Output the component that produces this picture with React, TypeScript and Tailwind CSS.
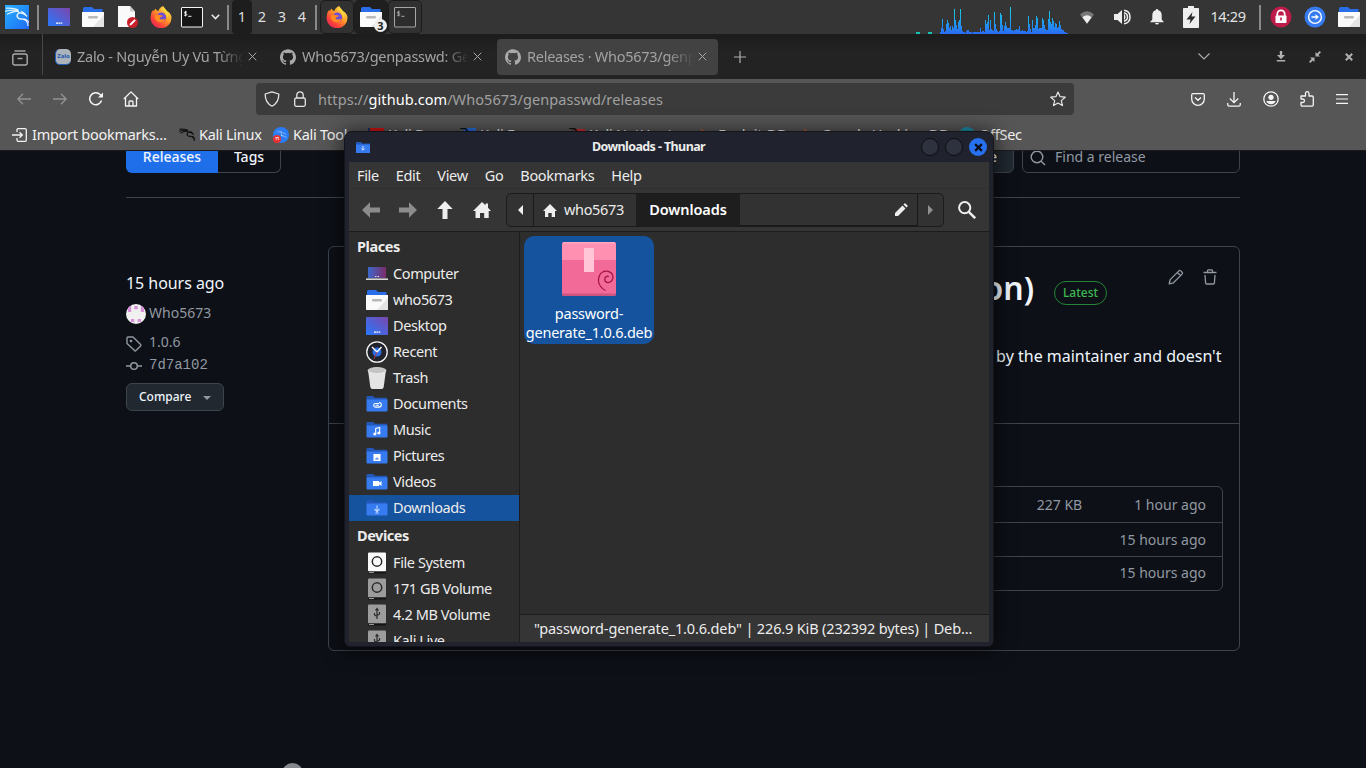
import type { ReactNode } from "react";
import { SiKalilinux, SiGithub } from "react-icons/si";

const UI = "font-['Noto_Sans',sans-serif]";

function Cell({ w, children }: { w: string; children: ReactNode }) {
  return <div className={`flex h-[34px] shrink-0 items-center justify-center ${w}`}>{children}</div>;
}

function Sep() {
  return (
    <Cell w="w-2">
      <div className="h-[25px] w-[2px] bg-[#8a8a8a]" />
    </Cell>
  );
}

function DesktopIcon({ className = "h-[18px] w-[22px]" }: { className?: string }) {
  return (
    <svg viewBox="0 0 22 18" className={className}>
      <defs>
        <linearGradient id="desk" x1="0" y1="1" x2="1" y2="0">
          <stop offset="0.1" stopColor="#2f74f5" />
          <stop offset="1" stopColor="#7d46ac" />
        </linearGradient>
      </defs>
      <rect width="22" height="18" rx="0.8" fill="url(#desk)" />
      <path d="M8 14.5h2v1.3H8zM10.4 14.5h1.6v1.3h-1.6zM12.5 14.5h1.8v1.3h-1.8z" fill="#fff" />
    </svg>
  );
}

function HomeFolder() {
  return (
    <svg viewBox="0 0 22 20" className="h-5 w-[22px]">
      <path d="M1 1.5Q1 0 2.5 0H10l2 2h8.500v5H1z" fill="#2a6de8" />
      <path d="M0 5h22v14.2q0 .8-.8.8H.8q-.8 0-.8-.8z" fill="#fafafa" />
      <path d="M22 8v11.2q0 .8-.8.8H11z" fill="#e4e4e4" />
      <rect x="6" y="9" width="10" height="2.4" rx="1.2" fill="#b9b9b9" />
    </svg>
  );
}

function Firefox() {
  return (
    <svg viewBox="0 0 22 22" className="h-[22px] w-[22px]">
      <defs>
        <linearGradient id="fx" x1="0.85" y1="0.1" x2="0.15" y2="0.95">
          <stop offset="0" stopColor="#ffe04a" />
          <stop offset="0.4" stopColor="#ff9a2a" />
          <stop offset="0.75" stopColor="#fb4338" />
          <stop offset="1" stopColor="#e72360" />
        </linearGradient>
      </defs>
      <path
        d="M13 0q-1 3 1.5 5 2.3 2 3.2 3.2-.1-2-.9-3.2Q21.600 7.500 21.500 12A10.500 10.100 0 0 1 .5 12Q.4 7 3.200 3.500q0 1 .4 1.700Q5 3.600 5.200 2.500q1 1.700 3.300 2.700Q9 1.800 13 0z"
        fill="url(#fx)"
      />
      <circle cx="11.300" cy="11.400" r="4.800" fill="#6d4fd6" />
      <path d="M6.500 9q2.800-.8 4.500.2 1 .6 2 .3-.5 1.500-2.300 1.600-1 .3-.9 1.300.6 1.300 2.600 1 2-.6 3 0-2 3.300-5.600 2.800-4.600-.800-5-5.200 0-1.600 1.700-2z" fill="#ff8a1e" />
      <path d="M13 0q-2 3 1 5.500 3.500 2.800 3.300 6.500 1.600-2 1-5Q16.500 4 13 0z" fill="#ffd83f" />
    </svg>
  );
}

function Terminal({ dim = false }: { dim?: boolean }) {
  return (
    <svg viewBox="0 0 22 21" className={dim ? "h-[21px] w-[22px] opacity-60" : "h-[21px] w-[22px]"}>
      <rect x="0.5" y="0.5" width="21" height="19.500" rx="0.5" fill={dim ? "#2b2b2b" : "#161616"} stroke="#f5f5f5" />
      <path d="M5.900 5.100q-2.600-.9-2.600.6 0 .8 1.300 1 1.400.200 1.300 1.100-.1 1.200-2.700.5M4.600 3.800v5.600M7.200 9.300h3.300" stroke="#eee" strokeWidth="1" fill="none" />
    </svg>
  );
}

const load = [
  2, 6, 15, 5, 2, 3, 10, 14, 11, 6, 8, 4, 8, 6, 25, 14, 9, 5, 12, 14, 25, 8, 3, 2, 2, 1, 3, 4, 4, 2, 2, 2, 1, 2, 2, 2, 2, 2,
  2, 2, 6, 2, 3, 3, 2, 14, 10, 12, 19, 4, 14, 5, 4, 3, 22, 10, 5, 3, 2, 3, 21, 19, 9, 3, 8, 12, 8, 6, 6, 6, 27, 4, 4, 3, 4,
  4, 5, 4, 5, 8, 3, 3, 4, 3, 3, 3, 2, 3, 18, 10, 5, 2, 14, 6, 6, 9, 18, 16, 5, 6, 6, 6, 16, 14, 9, 5, 4, 4, 15, 23, 12, 10,
  16, 13, 7, 11, 10, 6, 7, 13, 9, 5, 4, 4, 2, 2, 1, 1,
];

function LoadGraph() {
  return (
    <svg viewBox="0 0 152 34" className="h-[34px] w-[152px]" shapeRendering="crispEdges">
      <defs>
        <linearGradient id="load" gradientUnits="userSpaceOnUse" x1="0" y1="8" x2="0" y2="34">
          <stop offset="0" stopColor="#16cfe0" />
          <stop offset="0.5" stopColor="#1fa3ee" />
          <stop offset="1" stopColor="#2a6af5" />
        </linearGradient>
      </defs>
      <path d="M0 32h4v2H0zM12 32h4v2h-4z" fill="#17c3b0" />
      {load.map((h, i) => (
        <rect key={i} x={24 + i} y={34 - h} width="1" height={h} fill="url(#load)" />
      ))}
    </svg>
  );
}

function TaskBar() {
  return (
    <header className="flex h-[34px] shrink-0 items-center bg-[#353535]">
      <Cell w="w-[34px]">
        <div className="flex size-6 items-center justify-center bg-gradient-to-br from-[#2bb2ff] to-[#2368f3]">
          <SiKalilinux className="size-6 text-white" stroke="#fff" strokeWidth="0.6" />
        </div>
      </Cell>
      <Sep />
      <Cell w="w-[34px]"><DesktopIcon /></Cell>
      <Cell w="w-[34px]"><HomeFolder /></Cell>
      <Cell w="w-[36px]">
        <svg viewBox="0 0 22 22" className="size-[22px]">
          <path d="M1 0h12l5 5.500V21H1z" fill="#fafafa" />
          <path d="M13 0l5 5.500h-5z" fill="#c9c9c9" />
          <circle cx="15.500" cy="16.500" r="5.500" fill="#c8202b" />
          <path d="M12.500 19.500l.6-1.900 4.400-4.300 1.300 1.300-4.400 4.300z" fill="#fff" />
        </svg>
      </Cell>
      <Cell w="w-[30px]"><Firefox /></Cell>
      <Cell w="w-[32px]"><Terminal /></Cell>
      <Cell w="w-[14px]">
        <svg viewBox="0 0 9 6" className="h-1.5 w-[9px]"><path d="M.8.800l3.700 3.700L8.200.800" fill="none" stroke="#e8e8e8" strokeWidth="1.600" /></svg>
      </Cell>
      <div className="w-[2px]" />
      <Sep />
      {["1", "2", "3", "4"].map((n) => (
        <div
          key={n}
          className={`flex h-[34px] w-5 items-center justify-center text-[14.5px] text-[#dedede] ${n === "1" ? "rounded bg-[#1d1d1d]" : ""}`}
        >
          {n}
        </div>
      ))}
      <Sep />
      <div className="flex h-[34px] w-[34px] items-center justify-center rounded-[5px] border border-[#1c1c1c] bg-[#313131]"><Firefox /></div>
      <div className="relative flex h-[34px] w-[34px] items-center justify-center rounded-[5px] bg-[#1f1f1f]">
        <HomeFolder />
        <span className="absolute right-px bottom-0.5 flex size-[13px] items-center justify-center rounded-full bg-[#eee] text-[11px] leading-none font-bold text-[#222]">3</span>
      </div>
      <div className="flex h-[34px] w-[34px] items-center justify-center rounded-[5px] border border-[#1c1c1c] bg-[#313131]"><Terminal dim /></div>
      <div className="flex-1" />
      <LoadGraph />
      <Cell w="w-[37px]">
        <svg viewBox="0 0 14 13" className="h-[13px] w-3.5">
          <path d="M0 3.500Q7-3 14 3.500L7 13z" fill="#777" />
          <path d="M2.400 6.200Q7 2.300 11.600 6.200L7 12.500z" fill="#efefef" />
        </svg>
      </Cell>
      <Cell w="w-[35px]">
        <svg viewBox="0 0 18 16" className="h-4 w-[18px]">
          <path d="M0 5h3.500L8 1v14l-4.500-4H0z" fill="#eee" />
          <path d="M10 4.500q3 3.500 0 7z" fill="#eee" />
          <path d="M10 1.200q6 .8 6 6.800t-6 6.800M10 3.700q3.500.8 3.500 4.300T10 12.300" fill="none" stroke="#eee" strokeWidth="1.500" />
        </svg>
      </Cell>
      <Cell w="w-[34px]">
        <svg viewBox="0 0 14 16" className="h-4 w-3.5" fill="#eee">
          <path d="M7 0q1.200 0 1.200 1.200Q11.500 2 11.700 6v4.500L14 13.200H0l2.300-2.700V6Q2.500 2 5.800 1.200 5.800 0 7 0zM5 14h4q-.4 1.600-2 1.600T5 14z" />
        </svg>
      </Cell>
      <Cell w="w-[34px]">
        <svg viewBox="0 0 16 22" className="h-[22px] w-4">
          <path d="M5 0h6v2h4.200q.8 0 .8.800V21.200q0 .8-.8.8H.8q-.8 0-.8-.8V2.800q0-.8.800-.8H5z" fill="#eee" />
          <path d="M9.500 6L3.500 13.500h4L6.500 18l6-7.500h-4z" fill="#2b2b2b" />
        </svg>
      </Cell>
      <Cell w="w-10"><span className="text-[14.5px] tracking-[-0.4px] text-[#e2e2e2]">14:29</span></Cell>
      <div className="w-2" />
      <Sep />
      <Cell w="w-[33px]">
        <svg viewBox="0 0 22 22" className="size-[22px]">
          <circle cx="11" cy="11" r="10.500" fill="#bd1c49" />
          <path d="M7.300 10V8a3.700 3.700 0 0 1 7.400 0v2" fill="none" stroke="#fff" strokeWidth="1.800" />
          <rect x="5.500" y="9.500" width="11" height="7.500" rx="0.800" fill="#fff" />
          <path d="M10.200 11.500h1.600v3h-1.600z" fill="#bd1c49" />
        </svg>
      </Cell>
      <Cell w="w-[35px]">
        <svg viewBox="0 0 22 22" className="size-[22px]">
          <circle cx="11" cy="11" r="10.500" fill="#367bf0" />
          <circle cx="11" cy="11" r="6.400" fill="none" stroke="#fff" strokeWidth="1.400" />
          <path d="M7.500 10.200h4V8.300L15 11l-3.500 2.700v-1.900h-4z" fill="#fff" />
        </svg>
      </Cell>
      <Cell w="w-[34px]"><HomeFolder /></Cell>
    </header>
  );
}

function Tab({ icon, label, active = false }: { icon: ReactNode; label: string; active?: boolean }) {
  return (
    <div className={`mr-1 flex h-9 w-[221px] items-center rounded pl-2 ${active ? "bg-[#424242]" : ""}`}>
      {icon}
      <span className="mt-px ml-[6px] w-[167px] overflow-hidden whitespace-nowrap text-[14.5px] tracking-[-0.27px] text-[#a3a3a3] [mask-image:linear-gradient(to_right,black_84%,transparent)]">
        {label}
      </span>
      <svg viewBox="0 0 10 10" className="ml-1 size-[9px]"><path d="M.8.800l8.400 8.400M9.200.800L.8 9.200" stroke="#aaa" strokeWidth="1.100" /></svg>
    </div>
  );
}

function TabStrip() {
  return (
    <div className="flex h-[45px] shrink-0 items-center bg-gradient-to-b from-[#1c1c1c] via-[#232323] via-40% to-[#232323]">
      <div className="flex h-[41px] w-[43px] items-center justify-center self-start border-r border-[#484848] pt-1.5 pr-0.5">
        <svg viewBox="0 0 16 16" className="size-4" fill="none" stroke="#aaa" strokeWidth="1.400">
          <path d="M2.500 1h11" />
          <rect x="0.800" y="4" width="14.400" height="11" rx="2" />
          <path d="M5.500 8.500h5" />
        </svg>
      </div>
      <div className="ml-1 flex">
        <Tab
          label="Zalo - Nguyễn Uy Vũ Từng"
          icon={<span className="flex size-4 items-center justify-center rounded-[5px] border-b border-l border-[#2060c0] bg-[#adb3ba] text-[6px] font-bold text-[#1c56ac]">Zalo</span>}
        />
        <Tab label="Who5673/genpasswd: Gen" icon={<SiGithub className="size-4 text-[#aaa]" />} />
        <Tab active label="Releases · Who5673/genp" icon={<SiGithub className="size-4 text-[#aaa]" />} />
      </div>
      <svg viewBox="0 0 12 12" className="ml-3 size-3"><path d="M6 0v12M0 6h12" stroke="#b0b0b0" strokeWidth="1.200" /></svg>
      <div className="flex-1" />
      <svg viewBox="0 0 12 7" className="mr-[66px] h-[7px] w-3"><path d="M.5.500L6 6 11.500.500" fill="none" stroke="#aaa" strokeWidth="1.200" /></svg>
      <svg viewBox="0 0 10 11" className="mr-[23px] h-[11px] w-[10px]" fill="#b0b0b0"><path d="M3.800 0h2.400v4H9L5 8.300 1 4h2.800zM.8 9h8.400v1.600H.8z" /></svg>
      <svg viewBox="0 0 12 12" className="mr-6 size-3" fill="#b0b0b0"><path d="M6.500 5.500V1l1.600 1.600L10.700 0 12 1.300 9.400 3.900 11 5.500zM5.500 6.500V11L3.900 9.400 1.300 12 0 10.700l2.600-2.600L1 6.500z" /></svg>
      <svg viewBox="0 0 8 8" className="mr-[13px] size-2"><path d="M.8.800l6.400 6.400M7.200.800L.8 7.200" stroke="#b0b0b0" strokeWidth="2" /></svg>
    </div>
  );
}

function NavBar() {
  return (
    <div className="flex h-10 shrink-0 items-center bg-[#565656]">
      <svg viewBox="0 0 14 12" className="ml-[17px] h-3 w-3.5" fill="none" stroke="#939393" strokeWidth="1.300"><path d="M14 6H1M6 .800L.9 6 6 11.200" /></svg>
      <svg viewBox="0 0 14 12" className="ml-[22px] h-3 w-3.5" fill="none" stroke="#939393" strokeWidth="1.300"><path d="M0 6h13M8 .800L13.100 6 8 11.200" /></svg>
      <svg viewBox="0 0 14 14" className="ml-[22px] size-3.5" fill="none" stroke="#f5f5f5" strokeWidth="1.500">
        <path d="M12.500 8.500A6 6 0 1 1 11 2.500l1.500 1.500" />
        <path d="M9 5.500h5v-5z" fill="#f5f5f5" stroke="none" />
      </svg>
      <svg viewBox="0 0 16 16" className="ml-5 size-4" fill="none" stroke="#f5f5f5" strokeWidth="1.300" strokeLinejoin="round">
        <path d="M.8 8L8 .900 15.200 8M2.500 6.800V15h11V6.800" />
        <path d="M6 15v-4q0-1 1-1h2q1 0 1 1v4" />
      </svg>
      <div className="ml-[117px] flex h-8 w-[818px] items-center rounded bg-[#3b3b3b]">
        <svg viewBox="0 0 16 16" className="ml-2 size-4" fill="none" stroke="#e5e5e5" strokeWidth="1.300" strokeLinejoin="round">
          <path d="M8 .800L14.800 3q.2 8.500-6.800 12.200Q1 11.500 1.200 3z" />
        </svg>
        <svg viewBox="0 0 12 16" className="ml-[14px] h-4 w-3" fill="none" stroke="#e5e5e5" strokeWidth="1.300">
          <rect x="0.700" y="7" width="10.600" height="8.300" rx="1.500" />
          <path d="M2.800 7V4a3.200 3.200 0 0 1 6.400 0v3" />
        </svg>
        <span className="mt-0.5 ml-3 text-[14.5px] tracking-[0.07px] text-[#a0a0a0]">
          https://<span className="text-white">github.com</span>/Who5673/genpasswd/releases
        </span>
        <svg viewBox="0 0 16 16" className="mr-2 ml-auto size-4" fill="none" stroke="#e8e8e8" strokeWidth="1.200" strokeLinejoin="round">
          <path d="M8 1l2.100 4.700 5.100.5-3.900 3.400 1.200 5L8 12l-4.500 2.600 1.200-5L.8 6.200l5.100-.5z" />
        </svg>
      </div>
      <div className="ml-auto flex items-center text-[#f5f5f5]">
        <svg viewBox="0 0 14 13" className="mr-[22px] h-[13px] w-3.5" fill="none" stroke="currentColor" strokeWidth="1.300">
          <path d="M2 .700h10q1.300 0 1.300 1.300v4a6.300 6.300 0 0 1-12.600 0V2Q.7.700 2 .700zM4 4.500l3 2.800 3-2.800" />
        </svg>
        <svg viewBox="0 0 14 15" className="mr-[22px] h-[15px] w-3.5" fill="none" stroke="currentColor" strokeWidth="1.300">
          <path d="M7 0v10.500M2.800 6.500L7 10.600l4.200-4.100M.7 11v1.500q0 1.700 1.700 1.700h9.200q1.700 0 1.700-1.700V11" />
        </svg>
        <svg viewBox="0 0 16 16" className="mr-[21px] size-4">
          <circle cx="8" cy="8" r="7.200" fill="none" stroke="currentColor" strokeWidth="1.300" />
          <circle cx="8" cy="6.300" r="2.600" fill="currentColor" />
          <path d="M3.300 10h9.400q-1.500 3.300-4.700 3.300T3.300 10z" fill="currentColor" />
        </svg>
        <svg viewBox="0 0 14 16" className="mr-[22px] h-4 w-3.5" fill="none" stroke="currentColor" strokeWidth="1.300" strokeLinejoin="round">
          <path d="M1 5h4.500V2.500q0-1.800 1.700-1.800T9 2.500V5h3q1.300 0 1.300 1.300v7.500q0 1.400-1.300 1.400H2.300Q1 15.200 1 13.800V11.500h1.700q1.800 0 1.800-1.700T2.700 8H1z" />
        </svg>
        <svg viewBox="0 0 12 10" className="mr-[18px] h-[10px] w-3"><path d="M0 .600h12M0 5h12M0 9.400h12" stroke="currentColor" strokeWidth="1.200" /></svg>
      </div>
    </div>
  );
}

function Bookmark({ icon, label, w }: { icon: ReactNode; label: string; w: string }) {
  return (
    <div className={`flex shrink-0 items-center gap-1 whitespace-nowrap ${w}`}>
      {icon}
      <span>{label}</span>
    </div>
  );
}

function BookmarkBar() {
  return (
    <div className="flex h-8 shrink-0 items-center border-b border-[#1b1b1b] bg-[#565656] pl-3 text-[14.5px] tracking-[-0.27px] text-[#f2f2f2]">
      <Bookmark
        w="w-[167px]"
        label="Import bookmarks…"
        icon={
          <svg viewBox="0 0 16 14" className="h-3.5 w-4" fill="none" stroke="#f2f2f2" strokeWidth="1.300">
            <path d="M5 4V2Q5 .700 6.300.700H13q1.300 0 1.300 1.300v10q0 1.300-1.300 1.300H6.300Q5 13.300 5 12v-2M0 7h10M7.500 4.300L10.300 7 7.500 9.700" />
          </svg>
        }
      />
      <Bookmark w="w-[94px]" label="Kali Linux" icon={<SiKalilinux className="size-4 text-[#080808]" stroke="#080808" strokeWidth="0.8" />} />
      <Bookmark
        w="w-[95px]"
        label="Kali Tools"
        icon={
          <span className="relative flex size-4 items-center justify-center rounded-full bg-[#2a7cf5]">
            <SiKalilinux className="size-3 text-white" />
            <span className="absolute bottom-0 left-0 flex size-2 items-center justify-center rounded-full bg-[#e83030] text-[6px] text-white">π</span>
          </span>
        }
      />
      <Bookmark w="w-[92px]" label="Kali Docs" icon={<span className="h-3.5 w-4 border-l-2 border-[#17305e] bg-[#d01414]" />} />
      <Bookmark w="w-[109px]" label="Kali Forums" icon={<svg viewBox="0 0 16 14" className="h-3.5 w-4"><path d="M3 0h13v14H6z" fill="#2a6fdd" /><path d="M0 0l6 1 3 4" stroke="#111" strokeWidth="1.500" fill="none" /></svg>} />
      <Bookmark w="w-[129px]" label="Kali NetHunter" icon={<svg viewBox="0 0 16 14" className="h-3.5 w-4"><path d="M5 1h11v13H6z" fill="#d62931" /><path d="M0 0l6 1 3 4" stroke="#111" strokeWidth="1.500" fill="none" /></svg>} />
      <Bookmark w="w-[103px]" label="Exploit-DB" icon={<svg viewBox="0 0 16 16" className="size-4"><path d="M2 1l6 4 6 8-8-6z" fill="#c9572a" /></svg>} />
      <Bookmark w="w-[158px]" label="Google Hacking DB" icon={<svg viewBox="0 0 16 16" className="size-4"><path d="M2 1l6 4 6 8-8-6z" fill="#c9572a" /></svg>} />
      <Bookmark w="w-[80px]" label="OffSec" icon={<span className="size-4 rounded-full bg-[#1a8fa8]" />} />
    </div>
  );
}

function ReleasePage() {
  return (
    <main className="relative flex-1 overflow-hidden bg-[#0d1017] px-[126px] text-[#f0f6fc]">
      <div className="-mt-[10px] flex h-8 text-sm font-medium">
        <div className="flex w-[92px] items-center justify-center rounded-l-md bg-[#1f6feb]">Releases</div>
        <div className="flex w-[63px] items-center justify-center rounded-r-md border border-l-0 border-[#3d444d]">Tags</div>
        <div className="ml-auto flex w-[160px] items-center justify-end rounded-md border border-[#3d444d] bg-[#212830] pr-4">Draft a new release</div>
        <div className="ml-2 flex w-[218px] items-center rounded-md border border-[#3d444d] text-[14px] font-normal text-[#9198a1]">
          <svg viewBox="0 0 16 16" className="mt-0.5 ml-[7px] size-4" fill="none" stroke="#9198a1" strokeWidth="1.400"><circle cx="7" cy="7" r="5.800" /><path d="M11.200 11.200l3.800 3.800" /></svg>
          <span className="ml-[9px]">Find a release</span>
        </div>
      </div>
      <div className="mt-6 h-px bg-[#3d444d]" />
      <div className="mt-12 flex">
        <aside className="w-[202px] pt-[25px] text-sm text-[#9198a1]">
          <div className="text-base leading-6 tracking-[-0.05px] text-[#f0f6fc]">15 hours ago</div>
          <div className="mt-1.5 flex h-6 items-center">
            <svg viewBox="0 0 20 20" className="mt-px size-5">
              <clipPath id="avatar"><circle cx="10" cy="10" r="10" /></clipPath>
              <g clipPath="url(#avatar)">
                <path d="M0 0h20v20H0z" fill="#f0f0f0" />
                <path d="M8.300 2h3.400v3.200H8.300zM2 2h3.200v6H2zM14.800 2H18v6h-3.200zM5 15h3.200v3H5zM11.700 15H15v3h-3.300z" fill="#d990da" />
              </g>
            </svg>
            <span className="ml-[3px]">Who5673</span>
          </div>
          <div className="mt-2 flex h-[18px] items-center">
            <svg viewBox="0 0 16 16" className="mt-1 size-4" fill="none" stroke="#9198a1" strokeWidth="1.400" strokeLinejoin="round"><path d="M1 2q0-1 1-1h5l7.600 7.600q.6.700 0 1.300l-4.700 4.700q-.6.600-1.300 0L1 7.500z" /><circle cx="5" cy="5" r="0.600" fill="#9198a1" /></svg>
            <span className="ml-[7px]">1.0.6</span>
          </div>
          <div className="mt-1 flex h-[18px] items-center">
            <svg viewBox="0 0 16 16" className="mt-1 size-4" fill="none" stroke="#9198a1" strokeWidth="1.500"><circle cx="8" cy="8" r="3.300" /><path d="M0 8h4.500M11.500 8H16" /></svg>
            <span className="mt-0.5 ml-[7px] font-['Liberation_Mono',monospace]">7d7a102</span>
          </div>
          <button className="mt-[10px] flex h-7 w-[98px] items-center rounded-md border border-[#3d444d] bg-[#212830] pl-3 text-xs font-medium text-[#f0f6fc]">
            Compare
            <svg viewBox="0 0 8 4" className="mt-0.5 ml-3 h-1 w-2"><path d="M0 0h8L4 4z" fill="#9198a1" /></svg>
          </button>
        </aside>
        <section className="flex h-[405px] w-[912px] flex-col rounded-md border border-[#3d444d]">
          <div className="h-[176px] pr-4">
            <div className="flex h-[92px] items-center">
              <div className="mb-[10px] flex-1 text-right text-[32px] font-semibold">(First version)</div>
              <div className="mb-px ml-5 flex h-6 w-[53px] items-center justify-center rounded-full border border-[#238636] text-xs font-medium text-[#3fb950]">Latest</div>
              <svg viewBox="0 0 16 16" className="mb-8 ml-[61px] size-4" fill="none" stroke="#9198a1" strokeWidth="1.300" strokeLinejoin="round"><path d="M1.200 14.800l1-4.200 8.700-8.700q.9-.9 1.800 0l1.400 1.400q.9.900 0 1.800l-8.700 8.700zM9.500 3.500l3 3" /></svg>
              <svg viewBox="0 0 16 16" className="mr-[5px] mb-8 ml-[18px] size-4" fill="none" stroke="#9198a1" strokeWidth="1.300"><path d="M1.500 3.500h13M5.500 3.500V1.700q0-.8.800-.8h3.400q.8 0 .8.800v1.800M3 6l.6 8q.1 1 1 1h6.800q.9 0 1-1L13 6" /></svg>
            </div>
            <div className="mt-[5px] pr-[1.5px] text-right text-base leading-6">This release was created by the maintainer and doesn't</div>
          </div>
          <div className="h-px bg-[#3d444d]" />
          <div className="mt-[62px] mr-4 ml-4 h-[105px] rounded-md border border-[#3d444d] text-sm text-[#9198a1]">
            <div className="flex h-9 items-center justify-end border-b border-[#3d444d] pr-4">
              <span className="mr-[52px]">227 KB</span><span>1 hour ago</span>
            </div>
            <div className="flex h-[34px] items-center justify-end border-b border-[#3d444d] pr-4">15 hours ago</div>
            <div className="flex h-8 items-center justify-end pr-4">15 hours ago</div>
          </div>
        </section>
      </div>
      <div className="absolute -bottom-4 left-[282px] size-[21px] rounded-full bg-[#85888d]" />
    </main>
  );
}

function BlueFolder({ children }: { children: ReactNode }) {
  return (
    <svg viewBox="0 0 22 18" className="h-[18px] w-[22px]">
      <path d="M.5 2q0-1 1-1H7l2 1.700h12v3H.5z" fill="#2458b8" />
      <path d="M.5 4.500h21v11q0 1-1 1h-19q-1 0-1-1z" fill="#367bf0" />
      <g fill="none" stroke="#fff" strokeWidth="1.100">{children}</g>
    </svg>
  );
}

const downArrow = <path d="M11 6.500v6M8.500 10l2.500 2.600 2.500-2.600M9.500 14h3" stroke="#c4d9ff" />;

function Drive({ usb = false, bright = false }: { usb?: boolean; bright?: boolean }) {
  return (
    <svg viewBox="0 0 22 22" className="size-[22px]">
      <rect x="2" y="0.500" width="18" height="19" rx="1" fill={bright ? "#fafafa" : "#9c9c9c"} />
      <path d="M2 19.500h18v2H2z" fill="#151515" />
      <path d="M3 20h5v1H3z" fill="#999" />
      {usb ? (
        <path d="M11 15V5M9.500 6.500L11 4.500l1.500 2M11 12.500L8.500 11V9M11 11.500l2.500-1.500V8" fill="none" stroke="#2b2b2b" strokeWidth="1.200" />
      ) : (
        <circle cx="11" cy="9.500" r="4.700" fill="none" stroke="#2a2a2a" strokeWidth="1.500" />
      )}
    </svg>
  );
}

const places: { label: string; icon: ReactNode }[] = [
  {
    label: "Computer",
    icon: (
      <svg viewBox="0 0 22 14" className="h-3.5 w-[22px]">
        <defs><linearGradient id="pc"><stop stopColor="#3c67cc" /><stop offset="1" stopColor="#7c2c68" /></linearGradient></defs>
        <path d="M2 0h18v11H2z" fill="url(#pc)" />
        <path d="M9 9.500h4" stroke="#ddd" strokeDasharray="1 .5" />
        <path d="M0 11.500h22v1.300H0z" fill="#fff" />
      </svg>
    ),
  },
  { label: "who5673", icon: <HomeFolder /> },
  { label: "Desktop", icon: <DesktopIcon /> },
  {
    label: "Recent",
    icon: (
      <svg viewBox="0 0 22 22" className="size-[22px]">
        <circle cx="11" cy="11" r="10.200" fill="#20232c" stroke="#f5f5f5" strokeWidth="1.300" />
        <circle cx="11" cy="11" r="4.500" fill="#2a6de8" />
        <path d="M6 6l5 5 4.500-5" fill="none" stroke="#fff" strokeWidth="1.400" />
        <path d="M11 11l-3 7" stroke="#c3353c" strokeWidth="0.900" />
      </svg>
    ),
  },
  {
    label: "Trash",
    icon: (
      <svg viewBox="0 0 22 22" className="size-[22px]">
        <path d="M2 3l2.300 17q.3 2 2 2h9.400q1.700 0 2-2L20 3z" fill="#e4e4e4" />
        <ellipse cx="11" cy="3.500" rx="9" ry="3" fill="#c4c4c4" stroke="#f0f0f0" strokeWidth="0.700" />
      </svg>
    ),
  },
  { label: "Documents", icon: <BlueFolder><path d="M13 8.500H9.500a1.800 1.800 0 0 0 0 3.600H13a2 2 0 0 0 0-4.600M9.500 10.300h3.500" /></BlueFolder> },
  { label: "Music", icon: <BlueFolder><path d="M9.700 13V7.500l4-1V12" /><path d="M8 12.200h1.700v1.600H8zM12 11.200h1.700v1.600H12z" fill="#fff" /></BlueFolder> },
  { label: "Pictures", icon: <BlueFolder><path d="M8 7.500h6v6H8z" fill="#fff" /><path d="M9.200 12h3.600M10.500 11h1" stroke="#367bf0" /></BlueFolder> },
  { label: "Videos", icon: <BlueFolder><path d="M7.500 8.500h5v4h-5zM13 10.500l2-1.500v3z" fill="#fff" /></BlueFolder> },
  { label: "Downloads", icon: <BlueFolder>{downArrow}</BlueFolder> },
];

const devices: { label: string; icon: ReactNode }[] = [
  { label: "File System", icon: <Drive bright /> },
  { label: "171 GB Volume", icon: <Drive /> },
  { label: "4.2 MB Volume", icon: <Drive usb /> },
  { label: "Kali Live", icon: <Drive usb /> },
];

function SideRow({ label, icon, selected = false }: { label: string; icon: ReactNode; selected?: boolean }) {
  return (
    <div className={`flex h-[26px] shrink-0 items-center pl-[17px] tracking-[-0.4px] ${selected ? "bg-[#15539e]" : ""}`}>
      <span className="flex w-[27px] shrink-0">{icon}</span>
      <span className="whitespace-nowrap">{label}</span>
    </div>
  );
}

function House() {
  return <svg viewBox="0 0 18 16" className="h-4 w-[18px]" fill="#eee"><path d="M9 0l3.500 3.300V1.500H15v4.200L18 9h-2.300v7h-4.500v-5H7v5H2.500V9H0z" /></svg>;
}

function Thunar() {
  return (
    <div className="absolute top-[131px] left-[344px] flex h-[516px] w-[650px] flex-col rounded-t-lg rounded-b-md border border-[#14151b] bg-[#20232e] text-[14.5px] tracking-[-0.13px] text-[#ececec] shadow-[0_2px_18px_4px_rgba(0,0,0,0.5)]">
      <div className="flex h-[30px] items-center">
        <svg viewBox="0 0 14 11" className="ml-[11px] h-[11px] w-3.5">
          <path d="M0 0h5l1.500 1.500H14V11H0z" fill="#2458b8" /><path d="M0 2.500h14V11H0z" fill="#367bf0" />
          <path d="M7 4v4M5.300 6.500L7 8.200l1.700-1.700" fill="none" stroke="#cfe0ff" />
        </svg>
        <div className="flex-1 pl-[6px] text-center text-[12.5px] font-bold tracking-[-0.6px]">Downloads - Thunar</div>
        <div className="mr-1.5 flex gap-[6px]">
          <div className="size-[18px] rounded-full border border-[#0d0e12] bg-[#2e323e]" />
          <div className="size-[18px] rounded-full border border-[#0d0e12] bg-[#2e323e]" />
          <div className="flex size-[18px] items-center justify-center rounded-full bg-[#2770f0]">
            <svg viewBox="0 0 8 8" className="size-[9px]"><path d="M1 1l6 6M7 1L1 7" stroke="#0a0d16" strokeWidth="2" /></svg>
          </div>
        </div>
      </div>
      <div className="mx-1 mb-1 flex min-h-0 flex-1 flex-col bg-[#353535]">
        <div className="flex h-[27px] shrink-0 items-center gap-[17px] border-b border-[#303030] px-2 pt-px tracking-[-0.35px]">
          {["File", "Edit", "View", "Go", "Bookmarks", "Help"].map((m) => <span key={m}>{m}</span>)}
        </div>
        <div className="flex h-[43px] shrink-0 items-center border-b border-[#1c1c1c]">
          <svg viewBox="0 0 18 16" className="ml-[13px] h-4 w-[18px]" fill="#8c8c8c"><path d="M0 8l8-7.700V5.500h10v5H8v5.200z" /></svg>
          <svg viewBox="0 0 18 16" className="ml-[19px] h-4 w-[18px]" fill="#8c8c8c"><path d="M18 8l-8-7.700V5.500H0v5h10v5.200z" /></svg>
          <svg viewBox="0 0 16 18" className="ml-5 h-[18px] w-4" fill="#eee"><path d="M8 0l7.700 8H10.500v10h-5V8H.3z" /></svg>
          <span className="ml-5"><House /></span>
          <div className="ml-[15px] flex h-[34px] w-[438px] overflow-hidden rounded-[5px] border border-[#1b1b1b] bg-[#323232]">
            <div className="flex w-[27px] items-center justify-center border-r border-[#1b1b1b]"><svg viewBox="0 0 5 10" className="h-2.5 w-[5px]"><path d="M5 0v10L0 5z" fill="#eee" /></svg></div>
            <div className="flex w-[102px] items-center gap-[7px] pl-[9px] tracking-[-0.35px]">
              <svg viewBox="0 0 14 13" className="h-[13px] w-3.5" fill="#eee"><path d="M7 0l7 7h-2v6H8.700V9H5.300v4H2V7H0z" /></svg>
              <span>who5673</span>
            </div>
            <div className="flex w-[104px] items-center justify-center bg-[#1e1e1e] font-semibold tracking-[-0.1px] text-white">Downloads</div>
            <div className="flex w-[178px] items-center justify-end border-r border-b border-[#181818] pr-[9px]">
              <svg viewBox="0 0 13 13" className="h-[13px] w-[13px]" fill="#eee"><path d="M0 13v-3l7.500-7.500 3 3L3 13zM8.500 1.500l1-1q.5-.5 1 0l2 2q.5.500 0 1l-1 1z" /></svg>
            </div>
            <div className="flex flex-1 items-center justify-center"><svg viewBox="0 0 5 10" className="h-2.5 w-[5px]"><path d="M0 0v10l5-5z" fill="#909090" /></svg></div>
          </div>
          <svg viewBox="0 0 18 18" className="ml-[14px] size-[18px]" fill="none" stroke="#eee"><circle cx="6.700" cy="6.700" r="5.600" strokeWidth="2" /><path d="M10.800 10.800l6.400 6.400" strokeWidth="2.500" /></svg>
        </div>
        <div className="flex min-h-0 flex-1">
          <div className="flex w-[171px] shrink-0 flex-col overflow-hidden border-r border-[#1c1c1c] bg-[#2d2d2d]">
            <div className="flex h-[29px] shrink-0 items-center pl-2 font-bold tracking-[-0.45px]">Places</div>
            {places.map((p) => <SideRow key={p.label} {...p} selected={p.label === "Downloads"} />)}
            <div className="flex h-[29px] shrink-0 items-center pl-2 font-bold tracking-[-0.45px]">Devices</div>
            {devices.map((p) => <SideRow key={p.label} {...p} />)}
          </div>
          <div className="flex min-w-0 flex-1 flex-col bg-[#2d2d2d]">
            <div className="flex-1 p-1">
              <div className="flex h-[108px] w-[130px] flex-col items-center rounded-[10px] bg-[#15539e] pt-1.5">
                <svg viewBox="0 0 54 54" className="size-[54px] shrink-0">
                  <rect width="54" height="54" rx="2.500" fill="#f26b98" />
                  <path d="M0 18V2.500Q0 0 2.500 0h49Q54 0 54 2.500V18z" fill="#ff90b2" />
                  <path d="M1 .800h52" stroke="#ffb3ca" strokeWidth="1" />
                  <path d="M0 52v-.5h54q0 2.500-2.500 2.500h-49Q0 54 0 52z" fill="#cd5580" />
                  <path d="M22 6h10v24H22z" fill="#ffc6d8" />
                  <path d="M43.500 48.500q-6-3-7-9-.5-7.500 5-10 5.500-1.500 8.700 2.500 2 4-1.200 7.500-3.500 2.300-5.800-.2-1.300-3 .8-4.600 1.800-.9 2.800 0" fill="none" stroke="#a8144b" strokeWidth="1.300" />
                </svg>
                <div className="mt-2 text-center leading-[19px] tracking-[-0.22px] whitespace-nowrap text-white">password-<br />generate_1.0.6.deb</div>
              </div>
            </div>
            <div className="flex h-7 shrink-0 items-center border-t border-[#1c1c1c] bg-[#353535] pl-[14px] tracking-[-0.15px] whitespace-pre">
              "password-generate_1.0.6.deb" | 226.9 KiB (232392 bytes) | Deb…
            </div>
          </div>
        </div>
      </div>
    </div>
  );
}

export default function App() {
  return (
    <div className={`relative flex h-[768px] w-[1366px] flex-col overflow-hidden ${UI}`}>
      <TaskBar />
      <TabStrip />
      <NavBar />
      <BookmarkBar />
      <ReleasePage />
      <Thunar />
    </div>
  );
}
